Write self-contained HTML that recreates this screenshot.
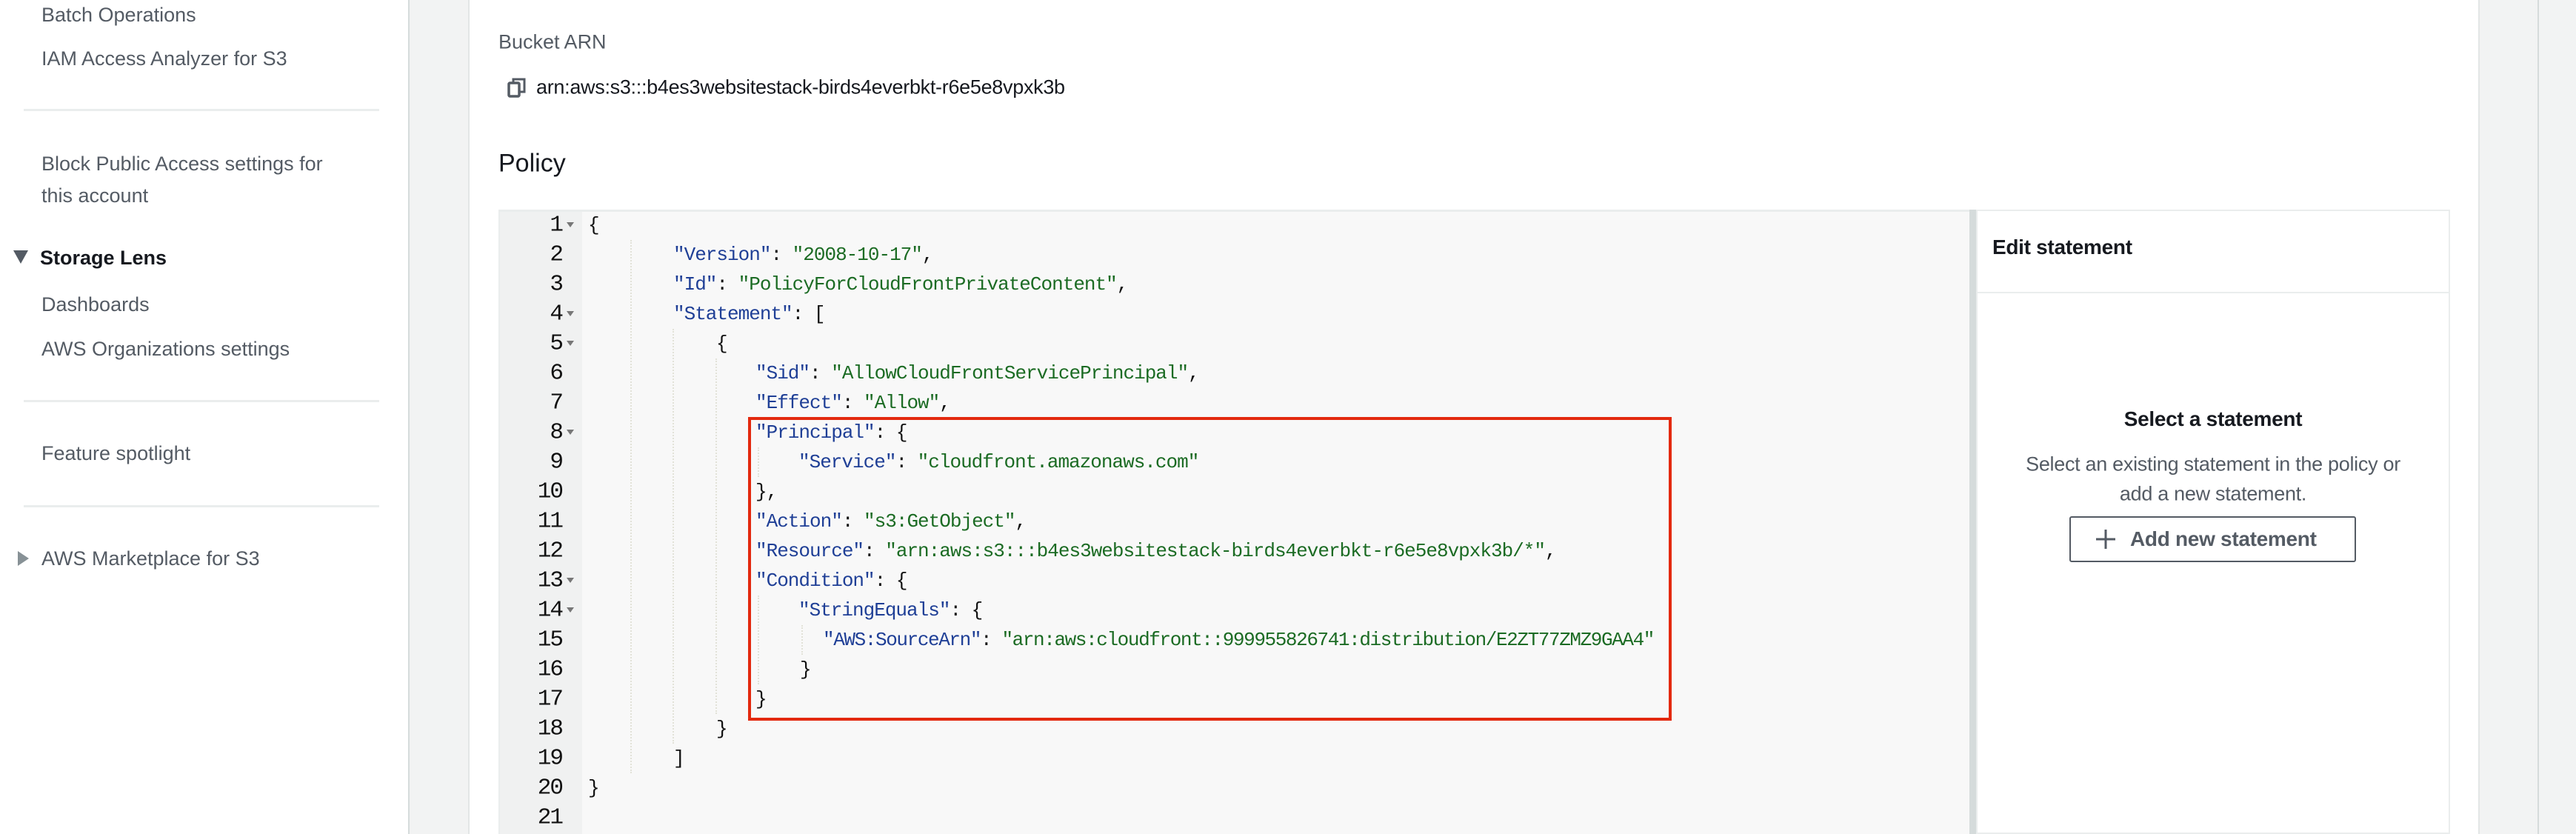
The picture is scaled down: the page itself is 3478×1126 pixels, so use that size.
<!DOCTYPE html>
<html><head><meta charset="utf-8"><style>
*{margin:0;padding:0;box-sizing:border-box}
body{width:3478px;height:1126px;overflow:hidden;background:#f2f3f3;font-family:"Liberation Sans",sans-serif;position:relative}
.a{position:absolute;white-space:nowrap}
.side{position:absolute;left:0;top:0;width:553px;height:1126px;background:#fff;border-right:2px solid #d5dbdb}
.si{position:absolute;left:56px;font-size:27px;color:#545b64;letter-spacing:0px;line-height:32px;transform:translateY(-50%)}
.div{position:absolute;left:32px;width:480px;height:3px;background:#eaeded}
.main{position:absolute;left:632px;top:0;width:2716px;height:1126px;background:#fff;border-left:2px solid #e3e6e6;border-right:2px solid #e3e6e6}
.ed{position:absolute;left:673px;top:283px;width:1986px;height:843px;background:#f8f8f8;border-top:3px solid #eaeded;border-left:2px solid #eaeded}
.gut{position:absolute;left:675px;top:286px;width:111px;height:840px;background:#f0f1f1}
.ln{position:absolute;right:2719px;font-family:"Liberation Mono",monospace;font-size:31px;color:#111;transform:translateY(-50%);letter-spacing:-2px}
.fd{position:absolute;left:765px;width:0;height:0;border-left:5px solid transparent;border-right:5px solid transparent;border-top:7px solid #777}
.c{position:absolute;font-family:"Liberation Mono",monospace;font-size:26px;letter-spacing:-1.0px;color:#111;white-space:pre;transform:translateY(-50%)}
.k{color:#1f3f96}.s{color:#1b6b23}
.g{position:absolute;width:0;border-left:2px dotted #e2e2d8}
</style></head><body>
<div class="side">
<div class="si" style="top:20px">Batch Operations</div>
<div class="si" style="top:79px">IAM Access Analyzer for S3</div>
<div class="div" style="top:147px"></div>
<div class="si" style="top:221px">Block Public Access settings for</div>
<div class="si" style="top:264px">this account</div>
<div class="a" style="left:18px;top:338px;width:0;height:0;border-left:10px solid transparent;border-right:10px solid transparent;border-top:18px solid #545b64"></div>
<div class="si" style="top:348px;left:54px;font-weight:bold;color:#16191f">Storage Lens</div>
<div class="si" style="top:411px">Dashboards</div>
<div class="si" style="top:471px">AWS Organizations settings</div>
<div class="div" style="top:540px"></div>
<div class="si" style="top:612px">Feature spotlight</div>
<div class="div" style="top:682px"></div>
<div class="a" style="left:24px;top:744px;width:0;height:0;border-top:10px solid transparent;border-bottom:10px solid transparent;border-left:15px solid #879196"></div>
<div class="si" style="top:754px">AWS Marketplace for S3</div>
</div>
<div class="main"></div>
<div class="a" style="left:3426px;top:0;width:2px;height:1126px;background:#d5dbdb"></div>
<div class="a" style="left:673px;top:57px;transform:translateY(-50%);font-size:27px;color:#545b64">Bucket ARN</div>
<svg class="a" style="left:684px;top:103px" width="28" height="30" viewBox="0 0 28 30"><rect x="3" y="9" width="14" height="18" rx="1.5" fill="none" stroke="#545b64" stroke-width="3.5"/><path d="M9 9V4h15v17h-7" fill="none" stroke="#545b64" stroke-width="3"/></svg>
<div class="a" style="left:724px;top:118px;transform:translateY(-50%);font-size:27px;color:#16191f;letter-spacing:-0.3px">arn:aws:s3:::b4es3websitestack-birds4everbkt-r6e5e8vpxk3b</div>
<div class="a" style="left:673px;top:221px;transform:translateY(-50%);font-size:34px;color:#16191f">Policy</div>
<div class="ed"></div>
<div class="gut"></div>
<div class="a" style="left:2659px;top:283px;width:9px;height:843px;background:#d5dbdb"></div>
<div class="a" style="left:2668px;top:283px;width:640px;height:843px;background:#fff;border:2px solid #eaeded"></div>
<div class="a" style="left:2668px;top:394px;width:640px;height:2px;background:#eaeded"></div>
<div class="a" style="left:2690px;top:334px;transform:translateY(-50%);font-size:28px;font-weight:bold;color:#16191f;letter-spacing:-0.3px">Edit statement</div>
<div class="a" style="left:2988px;top:566px;transform:translate(-50%,-50%);font-size:28px;font-weight:bold;color:#16191f;letter-spacing:-0.3px">Select a statement</div>
<div class="a" style="left:2988px;top:627px;transform:translate(-50%,-50%);font-size:27px;color:#545b64;letter-spacing:-0.3px">Select an existing statement in the policy or</div>
<div class="a" style="left:2988px;top:667px;transform:translate(-50%,-50%);font-size:27px;color:#545b64;letter-spacing:-0.3px">add a new statement.</div>
<div class="a" style="left:2794px;top:697px;width:387px;height:62px;border:2px solid #545b64;border-radius:3px"></div>
<svg class="a" style="left:2829px;top:714px" width="28" height="28" viewBox="0 0 28 28"><path d="M14 1v26M1 14h26" stroke="#545b64" stroke-width="3"/></svg>
<div class="a" style="left:2876px;top:728px;transform:translateY(-50%);font-size:28px;font-weight:bold;color:#545b64;letter-spacing:-0.3px">Add new statement</div>

<div class="ln" style="top:304px">1</div><div class="ln" style="top:344px">2</div><div class="ln" style="top:384px">3</div><div class="ln" style="top:424px">4</div><div class="ln" style="top:464px">5</div><div class="ln" style="top:504px">6</div><div class="ln" style="top:544px">7</div><div class="ln" style="top:584px">8</div><div class="ln" style="top:624px">9</div><div class="ln" style="top:664px">10</div><div class="ln" style="top:704px">11</div><div class="ln" style="top:744px">12</div><div class="ln" style="top:784px">13</div><div class="ln" style="top:824px">14</div><div class="ln" style="top:864px">15</div><div class="ln" style="top:904px">16</div><div class="ln" style="top:944px">17</div><div class="ln" style="top:984px">18</div><div class="ln" style="top:1024px">19</div><div class="ln" style="top:1064px">20</div><div class="ln" style="top:1104px">21</div>
<div class="fd" style="top:300px"></div><div class="fd" style="top:420px"></div><div class="fd" style="top:460px"></div><div class="fd" style="top:580px"></div><div class="fd" style="top:780px"></div><div class="fd" style="top:820px"></div>

<div class="g" style="left:851px;top:324px;height:720px"></div>
<div class="g" style="left:908px;top:444px;height:560px"></div>
<div class="g" style="left:966px;top:484px;height:480px"></div>
<div class="g" style="left:1023px;top:604px;height:40px"></div>
<div class="g" style="left:1023px;top:804px;height:120px"></div>
<div class="g" style="left:1082px;top:844px;height:40px"></div>

<div class="c" style="left:794px;top:304px">{</div>
<div class="c" style="left:909px;top:344px"><span class="k">"Version"</span>: <span class="s">"2008-10-17"</span>,</div>
<div class="c" style="left:909px;top:384px"><span class="k">"Id"</span>: <span class="s">"PolicyForCloudFrontPrivateContent"</span>,</div>
<div class="c" style="left:909px;top:424px"><span class="k">"Statement"</span>: [</div>
<div class="c" style="left:967px;top:464px">{</div>
<div class="c" style="left:1020px;top:504px"><span class="k">"Sid"</span>: <span class="s">"AllowCloudFrontServicePrincipal"</span>,</div>
<div class="c" style="left:1020px;top:544px"><span class="k">"Effect"</span>: <span class="s">"Allow"</span>,</div>
<div class="c" style="left:1020px;top:584px"><span class="k">"Principal"</span>: {</div>
<div class="c" style="left:1078px;top:624px"><span class="k">"Service"</span>: <span class="s">"cloudfront.amazonaws.com"</span></div>
<div class="c" style="left:1020px;top:664px">},</div>
<div class="c" style="left:1020px;top:704px"><span class="k">"Action"</span>: <span class="s">"s3:GetObject"</span>,</div>
<div class="c" style="left:1020px;top:744px"><span class="k">"Resource"</span>: <span class="s">"arn:aws:s3:::b4es3websitestack-birds4everbkt-r6e5e8vpxk3b/*"</span>,</div>
<div class="c" style="left:1020px;top:784px"><span class="k">"Condition"</span>: {</div>
<div class="c" style="left:1078px;top:824px"><span class="k">"StringEquals"</span>: {</div>
<div class="c" style="left:1111px;top:864px;letter-spacing:-1.4px"><span class="k">"AWS:SourceArn"</span>: <span class="s">"arn:aws:cloudfront::999955826741:distribution/E2ZT77ZMZ9GAA4"</span></div>
<div class="c" style="left:1080px;top:904px">}</div>
<div class="c" style="left:1020px;top:944px">}</div>
<div class="c" style="left:967px;top:984px">}</div>
<div class="c" style="left:909px;top:1024px">]</div>
<div class="c" style="left:794px;top:1064px">}</div>

<div class="a" style="left:1010px;top:563px;width:1247px;height:410px;border:4px solid #e3290f"></div>
</body></html>
